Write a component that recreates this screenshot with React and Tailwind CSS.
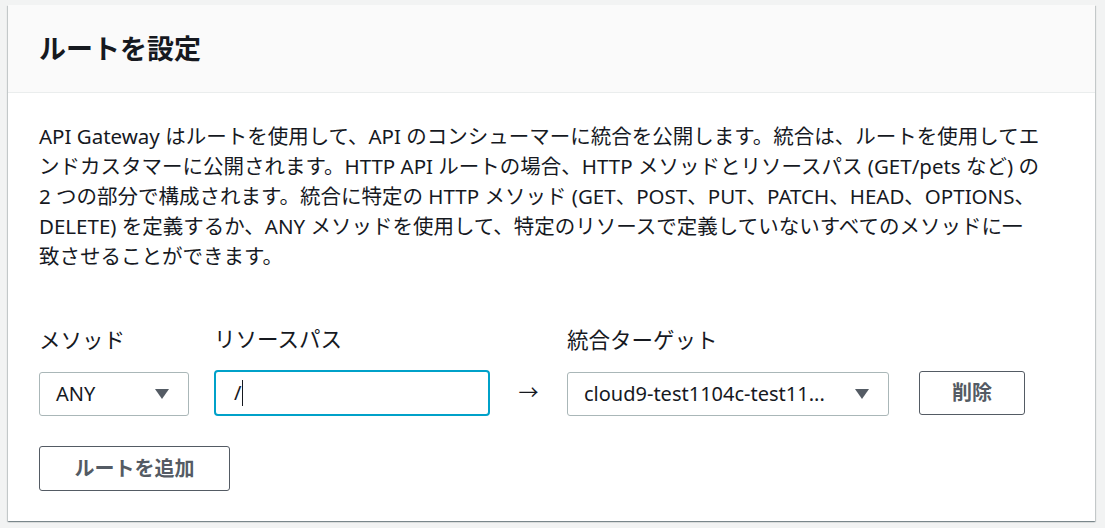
import React from 'react';

const font = { fontFamily: '"Noto Sans", "Noto Sans CJK JP", sans-serif' };

function Caret() {
  return (
    <svg width="16" height="12" viewBox="0 0 16 12" className="shrink-0">
      <path d="M1 1 H15 L8 11 Z" fill="#545b64" />
    </svg>
  );
}

export default function App() {
  return (
    <div className="min-h-[528px] w-[1105px] bg-[#f2f3f3] pt-[5px] pl-[8px] pr-[10px] pb-[7px]" style={font}>
      <div className="bg-white shadow-[0_1px_1px_0_rgba(0,28,36,0.3),1px_1px_1px_0_rgba(0,28,36,0.15),-1px_1px_1px_0_rgba(0,28,36,0.15)]">
        {/* Header */}
        <div className="h-[88px] bg-[#fafafa] border-b border-[#eaeded] px-[31px] flex items-center">
          <h2 className="text-[27px] font-bold text-[#16191f] leading-none">ルートを設定</h2>
        </div>

        {/* Body */}
        <div className="px-[31px] pt-[28px] pb-[30px]">
          <p className="text-[20.5px] leading-[30px] text-[#16191f] whitespace-nowrap">
            API Gateway はルートを使用して、API のコンシューマーに統合を公開します。統合は、ルートを使用してエ<br />
            ンドカスタマーに公開されます。HTTP API ルートの場合、HTTP メソッドとリソースパス (GET/pets など) の<br />
            2 つの部分で構成されます。統合に特定の HTTP メソッド (GET、POST、PUT、PATCH、HEAD、OPTIONS、<br />
            DELETE) を定義するか、ANY メソッドを使用して、特定のリソースで定義していないすべてのメソッドに一<br />
            致させることができます。
          </p>

          <div className="mt-[53px] flex items-end">
            <div className="w-[150px] flex flex-col">
              <label className="text-[21.5px] leading-[30px] text-[#16191f] mb-[17px]">メソッド</label>
              <div className="h-[44px] border border-[#aab7b8] rounded-[3px] flex items-center justify-between pl-[16px] pr-[18px] text-[20px] text-[#16191f]">
                <span>ANY</span>
                <Caret />
              </div>
            </div>

            <div className="ml-[25px] w-[276px] flex flex-col">
              <label className="text-[21.5px] leading-[30px] text-[#16191f] mb-[16px]">リソースパス</label>
              <div className="h-[46px] border-2 border-[#00a1c9] rounded-[4px] flex items-center pl-[18px] text-[20px] text-[#16191f]">
                <span>/</span>
                <span className="inline-block w-px h-[26px] bg-[#16191f] ml-[1px]"></span>
              </div>
            </div>

            <div className="w-[77px] h-[46px] flex items-center justify-center text-[20px] text-[#16191f]">→</div>

            <div className="w-[322px] flex flex-col">
              <label className="text-[21.5px] leading-[30px] text-[#16191f] mb-[17px]">統合ターゲット</label>
              <div className="h-[44px] border border-[#aab7b8] rounded-[3px] flex items-center justify-between pl-[16px] pr-[18px] text-[20px] text-[#16191f]">
                <span className="truncate">cloud9-test1104c-test11...</span>
                <Caret />
              </div>
            </div>

            <button className="ml-[30px] mb-px w-[106px] h-[44px] border border-[#545b64] rounded-[3px] bg-white text-[20px] font-bold text-[#545b64]">
              削除
            </button>
          </div>

          <button className="mt-[30px] w-[191px] h-[45px] border border-[#545b64] rounded-[3px] bg-white text-[20px] font-bold text-[#545b64]">
            ルートを追加
          </button>
        </div>
      </div>
    </div>
  );
}
